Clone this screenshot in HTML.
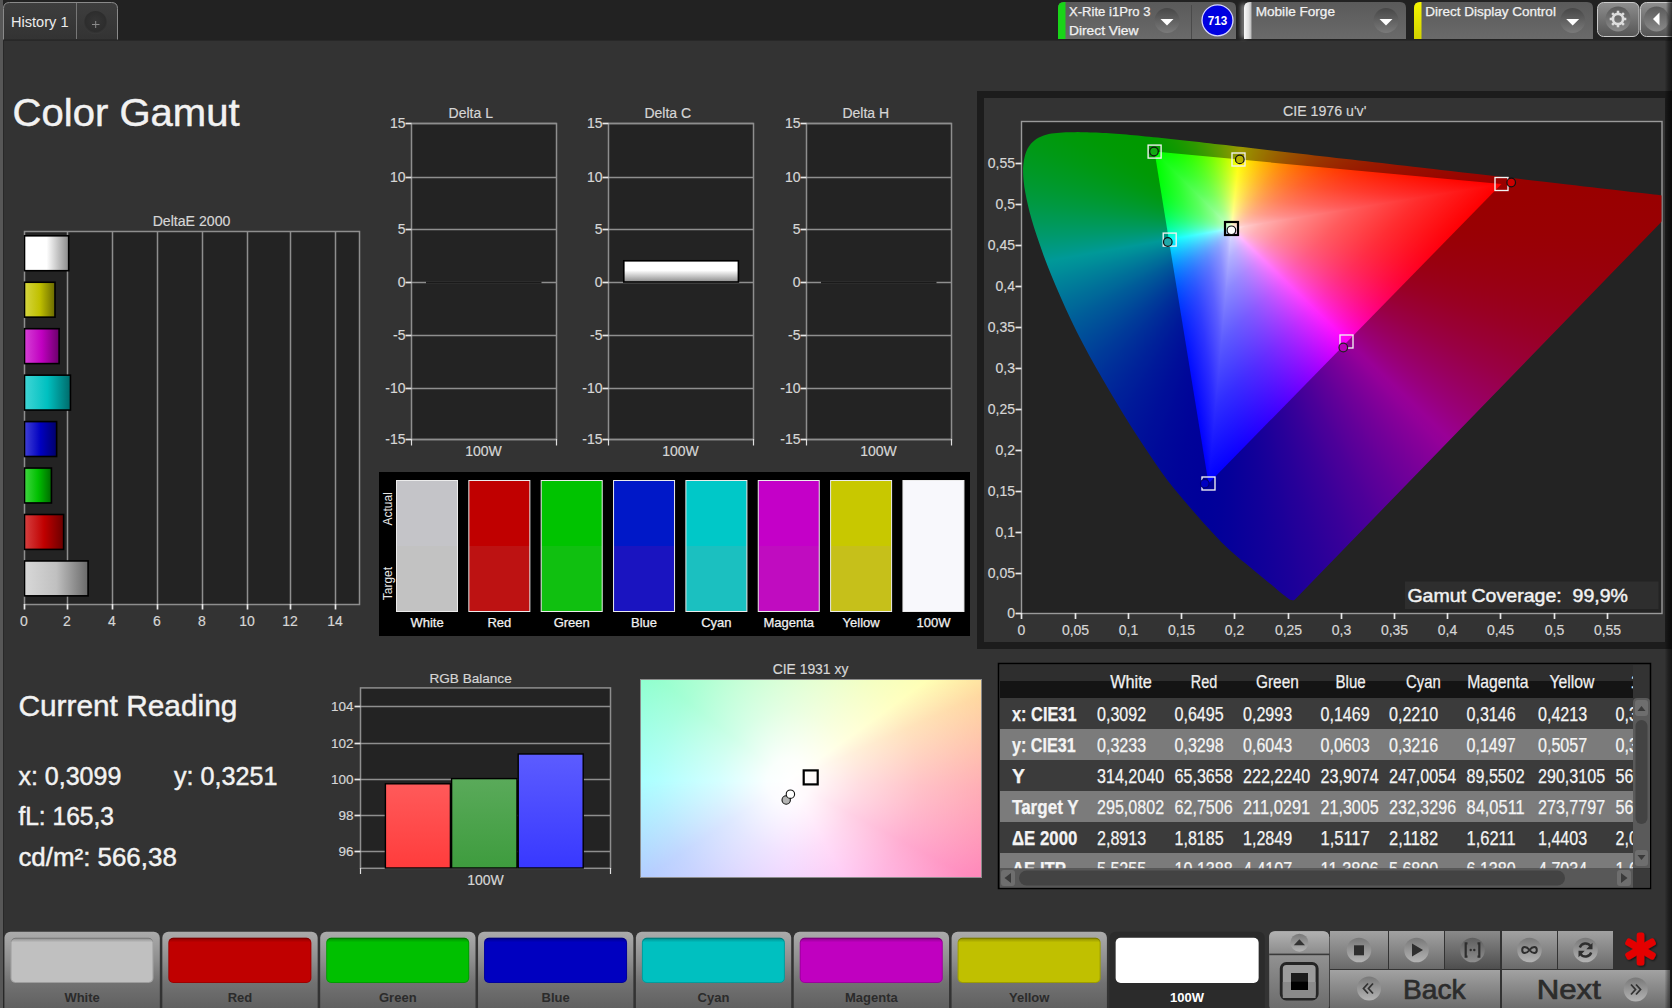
<!DOCTYPE html>
<html><head><meta charset="utf-8"><title>Color Gamut</title>
<style>html,body{margin:0;padding:0;background:#333;overflow:hidden;width:1672px;height:1008px}
svg{display:block;font-family:"Liberation Sans", sans-serif}
text[fill="#d6d6d6"]{stroke:#d6d6d6;stroke-width:0.18px}
text[fill="#f2f2f2"]{stroke:#f2f2f2;stroke-width:0.45px}
text[fill="#f4f4f4"],text[fill="#f0f0f0"]{stroke:#f2f2f2;stroke-width:0.25px}</style></head>
<body><svg width="1672" height="1008" viewBox="0 0 1672 1008">
<defs>
<linearGradient id="tabg" x1="0" y1="0" x2="0" y2="1"><stop offset="0" stop-color="#3e3e3e"/><stop offset="1" stop-color="#333"/></linearGradient>
<radialGradient id="plusg" cx="0.5" cy="0.45" r="0.55"><stop offset="0" stop-color="#363636"/><stop offset="0.8" stop-color="#2d2d2d"/><stop offset="1" stop-color="#3a3a3a"/></radialGradient>
<linearGradient id="ddg" x1="0" y1="0" x2="0" y2="1"><stop offset="0" stop-color="#5a5a5a"/><stop offset="1" stop-color="#6a6a6a"/></linearGradient>
<linearGradient id="ddbtn" x1="0" y1="0" x2="0" y2="1"><stop offset="0" stop-color="#474747"/><stop offset="1" stop-color="#7a7a7a"/></linearGradient>
<linearGradient id="wstrip" x1="0" y1="0" x2="1" y2="0"><stop offset="0" stop-color="#fafafa"/><stop offset="0.6" stop-color="#e0e0e0"/><stop offset="1" stop-color="#b8b8b8"/></linearGradient>
<linearGradient id="glow" x1="0" y1="0" x2="1" y2="0"><stop offset="0" stop-color="#fff" stop-opacity="0"/><stop offset="1" stop-color="#fff" stop-opacity="0.55"/></linearGradient>
<filter id="blur2" x="-200%" y="-20%" width="500%" height="140%"><feGaussianBlur stdDeviation="2.2"/></filter>
<linearGradient id="ystrip" x1="0" y1="0" x2="0" y2="1"><stop offset="0" stop-color="#f6f600"/><stop offset="1" stop-color="#d2d200"/></linearGradient>
<linearGradient id="gbg" x1="0" y1="0" x2="0" y2="1"><stop offset="0" stop-color="#8e8e8e"/><stop offset="1" stop-color="#555"/></linearGradient>
<linearGradient id="gbc" x1="0" y1="0" x2="0" y2="1"><stop offset="0" stop-color="#5a5a5a"/><stop offset="1" stop-color="#8a8a8a"/></linearGradient>
<linearGradient id="b_w" x1="0" y1="0" x2="1" y2="0"><stop offset="0" stop-color="#ffffff"/><stop offset="0.5" stop-color="#ffffff"/><stop offset="1" stop-color="#8a8a8a"/></linearGradient>
<linearGradient id="b_y" x1="0" y1="0" x2="1" y2="0"><stop offset="0" stop-color="#d6d640"/><stop offset="0.5" stop-color="#c0c000"/><stop offset="1" stop-color="#6a6a00"/></linearGradient>
<linearGradient id="b_m" x1="0" y1="0" x2="1" y2="0"><stop offset="0" stop-color="#d640d6"/><stop offset="0.5" stop-color="#c000c0"/><stop offset="1" stop-color="#6a006a"/></linearGradient>
<linearGradient id="b_c" x1="0" y1="0" x2="1" y2="0"><stop offset="0" stop-color="#40d6d6"/><stop offset="0.5" stop-color="#00c0c0"/><stop offset="1" stop-color="#006a6a"/></linearGradient>
<linearGradient id="b_b" x1="0" y1="0" x2="1" y2="0"><stop offset="0" stop-color="#4040d6"/><stop offset="0.5" stop-color="#0000c0"/><stop offset="1" stop-color="#00006a"/></linearGradient>
<linearGradient id="b_g" x1="0" y1="0" x2="1" y2="0"><stop offset="0" stop-color="#40d640"/><stop offset="0.5" stop-color="#00c000"/><stop offset="1" stop-color="#006a00"/></linearGradient>
<linearGradient id="b_r" x1="0" y1="0" x2="1" y2="0"><stop offset="0" stop-color="#d64040"/><stop offset="0.5" stop-color="#c00000"/><stop offset="1" stop-color="#6a0000"/></linearGradient>
<linearGradient id="b_gr" x1="0" y1="0" x2="1" y2="0"><stop offset="0" stop-color="#d8d8d8"/><stop offset="0.5" stop-color="#c0c0c0"/><stop offset="1" stop-color="#6a6a6a"/></linearGradient>
<linearGradient id="dcbar" x1="0" y1="0" x2="0" y2="1"><stop offset="0" stop-color="#fff"/><stop offset="0.45" stop-color="#fff"/><stop offset="1" stop-color="#8c8c8c"/></linearGradient>
<linearGradient id="rb_r" x1="0" y1="0" x2="0" y2="1"><stop offset="0" stop-color="#ff5a5a"/><stop offset="1" stop-color="#ff3c3c"/></linearGradient>
<linearGradient id="rb_g" x1="0" y1="0" x2="0" y2="1"><stop offset="0" stop-color="#5aaa5a"/><stop offset="1" stop-color="#3e9c3e"/></linearGradient>
<linearGradient id="rb_b" x1="0" y1="0" x2="0" y2="1"><stop offset="0" stop-color="#5c5cff"/><stop offset="1" stop-color="#3838ff"/></linearGradient>
<clipPath id="cliplocus"><path d="M1294.7,599.7 L1294.6,599.8 L1294.4,599.9 L1294.2,600.1 L1294.0,600.2 L1293.5,600.2 L1293.0,600.2 L1292.4,600.2 L1291.6,600.1 L1290.8,599.9 L1289.8,599.5 L1288.8,598.9 L1287.7,598.1 L1286.5,597.2 L1285.1,596.1 L1283.3,594.7 L1281.4,593.2 L1279.3,591.4 L1276.9,589.4 L1274.2,587.1 L1271.2,584.6 L1267.9,581.9 L1264.3,579.0 L1260.4,575.8 L1256.1,572.3 L1251.4,568.2 L1246.3,564.0 L1240.8,559.7 L1235.0,554.8 L1228.5,549.0 L1221.2,541.9 L1212.8,532.9 L1203.1,522.4 L1193.1,511.1 L1183.4,499.8 L1174.8,489.5 L1167.6,480.4 L1161.4,471.9 L1155.5,463.6 L1149.8,455.0 L1143.6,445.7 L1136.9,435.6 L1130.1,424.9 L1123.3,413.9 L1116.4,402.6 L1109.7,391.2 L1103.0,379.7 L1096.2,367.9 L1089.5,355.9 L1083.1,344.0 L1077.0,332.3 L1071.4,320.7 L1065.9,309.1 L1060.8,297.6 L1056.0,286.4 L1051.5,275.7 L1047.4,265.4 L1043.6,255.4 L1040.2,245.8 L1037.0,236.6 L1034.2,228.0 L1031.8,220.0 L1029.7,212.5 L1028.0,205.4 L1026.5,198.8 L1025.3,192.6 L1024.3,186.8 L1023.7,181.6 L1023.3,176.7 L1023.1,172.2 L1023.1,167.9 L1023.4,163.9 L1023.9,160.3 L1024.6,156.9 L1025.5,153.8 L1026.5,150.9 L1027.8,148.3 L1029.3,145.9 L1030.9,143.8 L1032.7,141.9 L1034.7,140.2 L1036.7,138.7 L1038.9,137.4 L1041.3,136.4 L1043.7,135.5 L1046.2,134.7 L1048.8,134.0 L1051.5,133.6 L1054.2,133.2 L1057.0,132.9 L1059.9,132.7 L1062.8,132.5 L1065.8,132.3 L1068.8,132.2 L1071.8,132.2 L1074.8,132.2 L1077.8,132.1 L1080.9,132.2 L1083.9,132.2 L1086.9,132.3 L1090.0,132.4 L1093.1,132.5 L1096.2,132.6 L1099.4,132.7 L1102.6,132.9 L1105.9,133.1 L1109.2,133.3 L1112.5,133.5 L1115.9,133.8 L1119.4,134.0 L1122.9,134.3 L1126.5,134.6 L1130.1,134.9 L1133.8,135.3 L1137.6,135.6 L1141.5,136.0 L1145.4,136.4 L1149.4,136.8 L1153.4,137.2 L1157.6,137.6 L1161.8,138.1 L1166.2,138.5 L1170.6,139.0 L1175.1,139.5 L1179.7,140.0 L1184.4,140.5 L1189.2,141.0 L1194.1,141.6 L1199.1,142.1 L1204.2,142.7 L1209.4,143.3 L1214.7,143.9 L1220.1,144.5 L1225.7,145.1 L1231.3,145.8 L1237.1,146.4 L1242.9,147.1 L1248.9,147.8 L1255.0,148.5 L1261.2,149.2 L1267.4,149.9 L1273.9,150.7 L1280.4,151.4 L1287.0,152.2 L1293.8,152.9 L1300.6,153.7 L1307.6,154.5 L1314.6,155.4 L1321.8,156.2 L1329.0,157.0 L1336.4,157.9 L1343.8,158.7 L1351.3,159.6 L1358.9,160.4 L1366.5,161.3 L1374.2,162.2 L1381.9,163.1 L1389.7,164.0 L1397.5,164.9 L1405.3,165.8 L1413.0,166.7 L1420.1,167.5 L1426.6,168.3 L1433.4,169.1 L1441.1,169.9 L1450.7,171.0 L1462.9,172.4 L1477.1,174.1 L1492.2,175.8 L1507.1,177.5 L1520.6,179.1 L1532.7,180.5 L1544.2,181.8 L1555.0,183.0 L1565.3,184.2 L1574.9,185.3 L1583.8,186.4 L1591.9,187.3 L1599.5,188.2 L1606.6,189.0 L1613.4,189.8 L1619.9,190.5 L1625.9,191.2 L1631.6,191.9 L1636.8,192.5 L1641.7,193.0 L1646.1,193.6 L1650.1,194.0 L1653.8,194.4 L1657.2,194.8 L1660.2,195.2 L1662.9,195.5 L1665.3,195.7 L1667.3,196.0 L1669.3,196.2 L1671.3,196.4 L1673.4,196.7 L1675.5,196.9 L1677.5,197.2 L1679.3,197.4 L1680.9,197.5 L1682.0,197.7 L1682.9,197.8 L1683.6,197.9 L1684.2,197.9 L1684.6,198.0 Z"/></clipPath>
<clipPath id="clipframe"><rect x="1022" y="122" width="639.5" height="491"/></clipPath>
<clipPath id="cliptri"><path d="M1154.5,151.6 L1501.5,184.0 L1208.5,483.5 Z"/></clipPath>
<linearGradient id="wt0" gradientUnits="userSpaceOnUse" x1="1231.5" y1="228.5" x2="1237.95" y2="159.39"><stop offset="0" stop-color="#fff" stop-opacity="1.000"/><stop offset="0.05" stop-color="#fff" stop-opacity="0.807"/><stop offset="0.12" stop-color="#fff" stop-opacity="0.688"/><stop offset="0.25" stop-color="#fff" stop-opacity="0.533"/><stop offset="0.45" stop-color="#fff" stop-opacity="0.355"/><stop offset="0.7" stop-color="#fff" stop-opacity="0.178"/><stop offset="1" stop-color="#fff" stop-opacity="0.000"/></linearGradient>
<linearGradient id="wt1" gradientUnits="userSpaceOnUse" x1="1231.5" y1="228.5" x2="1347.22" y2="341.71"><stop offset="0" stop-color="#fff" stop-opacity="1.000"/><stop offset="0.05" stop-color="#fff" stop-opacity="0.807"/><stop offset="0.12" stop-color="#fff" stop-opacity="0.688"/><stop offset="0.25" stop-color="#fff" stop-opacity="0.533"/><stop offset="0.45" stop-color="#fff" stop-opacity="0.355"/><stop offset="0.7" stop-color="#fff" stop-opacity="0.178"/><stop offset="1" stop-color="#fff" stop-opacity="0.000"/></linearGradient>
<linearGradient id="wt2" gradientUnits="userSpaceOnUse" x1="1231.5" y1="228.5" x2="1168.67" y2="238.72"><stop offset="0" stop-color="#fff" stop-opacity="1.000"/><stop offset="0.05" stop-color="#fff" stop-opacity="0.807"/><stop offset="0.12" stop-color="#fff" stop-opacity="0.688"/><stop offset="0.25" stop-color="#fff" stop-opacity="0.533"/><stop offset="0.45" stop-color="#fff" stop-opacity="0.355"/><stop offset="0.7" stop-color="#fff" stop-opacity="0.178"/><stop offset="1" stop-color="#fff" stop-opacity="0.000"/></linearGradient>
<clipPath id="cliphdr"><rect x="1000" y="665" width="633" height="33"/></clipPath>
<clipPath id="cliptab"><rect x="1000" y="698" width="633" height="170.5"/></clipPath>
<linearGradient id="cbg" x1="0" y1="0" x2="0" y2="1"><stop offset="0" stop-color="#ababab"/><stop offset="0.35" stop-color="#8e8e8e"/><stop offset="0.62" stop-color="#727272"/><stop offset="1" stop-color="#5c5c5c"/></linearGradient>
<linearGradient id="swbev" x1="0" y1="0" x2="0" y2="1"><stop offset="0" stop-color="#000" stop-opacity="0.28"/><stop offset="0.1" stop-color="#000" stop-opacity="0"/></linearGradient>
<linearGradient id="gb1" x1="0" y1="0" x2="0" y2="1"><stop offset="0" stop-color="#b2b2b2"/><stop offset="1" stop-color="#8c8c8c"/></linearGradient>
<linearGradient id="gb2" x1="0" y1="0" x2="0" y2="1"><stop offset="0" stop-color="#a2a2a2"/><stop offset="1" stop-color="#6a6a6a"/></linearGradient>
<linearGradient id="gb3" x1="0" y1="0" x2="0" y2="1"><stop offset="0" stop-color="#8a8a8a"/><stop offset="1" stop-color="#4e4e4e"/></linearGradient>
<linearGradient id="icg" x1="0" y1="0" x2="0" y2="1"><stop offset="0" stop-color="#787878"/><stop offset="1" stop-color="#b4b4b4"/></linearGradient>
<linearGradient id="icg3" x1="0" y1="0" x2="0" y2="1"><stop offset="0" stop-color="#5e5e5e"/><stop offset="1" stop-color="#8e8e8e"/></linearGradient>
<filter id="ash" x="-30%" y="-30%" width="160%" height="160%"><feDropShadow dx="1" dy="1" stdDeviation="1" flood-color="#000" flood-opacity="0.7"/></filter>
<linearGradient id="rstrip" x1="0" y1="0" x2="1" y2="0"><stop offset="0" stop-color="#000" stop-opacity="0"/><stop offset="0.45" stop-color="#000" stop-opacity="0.35"/><stop offset="1" stop-color="#000" stop-opacity="0.62"/></linearGradient>
</defs>
<rect x="0" y="0" width="1672" height="1008" fill="#333333"/>
<rect x="0" y="0" width="1672" height="40" fill="#222222"/>
<rect x="0" y="40" width="1672" height="1" fill="#282828"/>
<rect x="0" y="0" width="3" height="1008" fill="#575757"/>
<rect x="3" y="40" width="1" height="968" fill="#282828"/>
<path d="M3.5,39.5 V8.5 Q3.5,2.5 9.5,2.5 H111.5 Q117.5,2.5 117.5,8.5 V39.5" fill="url(#tabg)" stroke="#8a8a8a" stroke-width="1"/>
<line x1="76.5" y1="3" x2="76.5" y2="39" stroke="#777" stroke-width="1"/>
<circle cx="95.5" cy="22.5" r="11.5" fill="url(#plusg)"/>
<line x1="92" y1="24.5" x2="99.5" y2="24.5" stroke="#8a8a8a" stroke-width="1"/>
<line x1="95.7" y1="21" x2="95.7" y2="28" stroke="#8a8a8a" stroke-width="1"/>
<text x="11" y="27.3" font-size="14.6" fill="#ececec" textLength="57.5" lengthAdjust="spacingAndGlyphs">History 1</text>
<path d="M1058,39 V8 Q1058,2 1064,2 H1230 Q1236,2 1236,8 V39 Z" fill="url(#ddg)"/>
<path d="M1058,39 V8 Q1058,2 1064,2 H1065.5 V39 Z" fill="#19d419"/>
<circle cx="1167" cy="20.5" r="12.5" fill="url(#ddbtn)"/>
<path d="M1160.5,19 H1173.5 L1167,25.5 Z" fill="#fff"/>
<text x="1069" y="15.6" font-size="12" fill="#f0f0f0" textLength="81.5" lengthAdjust="spacingAndGlyphs">X-Rite i1Pro 3</text>
<text x="1069" y="34.7" font-size="12" fill="#f0f0f0" textLength="69.5" lengthAdjust="spacingAndGlyphs">Direct View</text>
<line x1="1191.5" y1="5" x2="1191.5" y2="39" stroke="#4a4a4a" stroke-width="1"/>
<circle cx="1217.5" cy="20.3" r="15.5" fill="#0000e0" stroke="#d8d8ff" stroke-width="1.3"/>
<text x="1217.5" y="24.8" font-size="12" fill="#ffffff" text-anchor="middle" font-weight="bold" textLength="19.5" lengthAdjust="spacingAndGlyphs">713</text>
<rect x="1241.5" y="4" width="4" height="34" fill="#ffffff" opacity="0.55" filter="url(#blur2)"/>
<path d="M1244,39 V8 Q1244,2 1250,2 H1400 Q1406,2 1406,8 V39 Z" fill="url(#ddg)"/>
<path d="M1244,39 V8 Q1244,2 1250,2 H1251.5 V39 Z" fill="url(#wstrip)"/>
<circle cx="1386" cy="20.5" r="12.5" fill="url(#ddbtn)"/>
<path d="M1379.5,19 H1392.5 L1386,25.5 Z" fill="#fff"/>
<text x="1255.7" y="15.6" font-size="12" fill="#f0f0f0" textLength="79.3" lengthAdjust="spacingAndGlyphs">Mobile Forge</text>
<path d="M1414,39 V8 Q1414,2 1420,2 H1587 Q1593,2 1593,8 V39 Z" fill="url(#ddg)"/>
<path d="M1414,39 V8 Q1414,2 1420,2 H1421.5 V39 Z" fill="url(#ystrip)"/>
<circle cx="1572.7" cy="20.5" r="12.5" fill="url(#ddbtn)"/>
<path d="M1566.2,19 H1579.2 L1572.7,25.5 Z" fill="#fff"/>
<text x="1425.3" y="15.6" font-size="12" fill="#f0f0f0" textLength="130.6" lengthAdjust="spacingAndGlyphs">Direct Display Control</text>
<rect x="1597.5" y="2.5" width="41.5" height="34" fill="url(#gbg)" stroke="#c9c9c9" stroke-width="1" rx="6"/>
<circle cx="1618" cy="19" r="12.5" fill="url(#gbc)"/>
<g transform="translate(1618,19)" fill="#dedede"><rect x="-1.25" y="-8.3" width="2.5" height="3.6" transform="rotate(0)"/><rect x="-1.25" y="-8.3" width="2.5" height="3.6" transform="rotate(45)"/><rect x="-1.25" y="-8.3" width="2.5" height="3.6" transform="rotate(90)"/><rect x="-1.25" y="-8.3" width="2.5" height="3.6" transform="rotate(135)"/><rect x="-1.25" y="-8.3" width="2.5" height="3.6" transform="rotate(180)"/><rect x="-1.25" y="-8.3" width="2.5" height="3.6" transform="rotate(225)"/><rect x="-1.25" y="-8.3" width="2.5" height="3.6" transform="rotate(270)"/><rect x="-1.25" y="-8.3" width="2.5" height="3.6" transform="rotate(315)"/><circle r="5.1" fill="none" stroke="#dedede" stroke-width="2.7"/></g>
<rect x="1640.5" y="2.5" width="45" height="34" fill="url(#gbg)" stroke="#c9c9c9" stroke-width="1" rx="6"/>
<circle cx="1656.5" cy="19" r="12.5" fill="url(#gbc)"/>
<path d="M1653,19 L1659.5,12.5 V25.5 Z" fill="#fff"/>
<text x="12.6" y="126.3" font-size="38.5" fill="#f2f2f2" textLength="227" lengthAdjust="spacingAndGlyphs">Color Gamut</text>
<text x="191.5" y="226" font-size="14" fill="#d6d6d6" text-anchor="middle" textLength="77.7" lengthAdjust="spacingAndGlyphs">DeltaE 2000</text>
<rect x="24.5" y="231.5" width="335" height="373" fill="#232323" stroke="#8e8e8e" stroke-width="1.5"/>
<line x1="67.5" y1="232" x2="67.5" y2="604" stroke="#8e8e8e" stroke-width="1.5"/>
<line x1="112.5" y1="232" x2="112.5" y2="604" stroke="#8e8e8e" stroke-width="1.5"/>
<line x1="157.5" y1="232" x2="157.5" y2="604" stroke="#8e8e8e" stroke-width="1.5"/>
<line x1="202.5" y1="232" x2="202.5" y2="604" stroke="#8e8e8e" stroke-width="1.5"/>
<line x1="247.5" y1="232" x2="247.5" y2="604" stroke="#8e8e8e" stroke-width="1.5"/>
<line x1="290.5" y1="232" x2="290.5" y2="604" stroke="#8e8e8e" stroke-width="1.5"/>
<line x1="335.5" y1="232" x2="335.5" y2="604" stroke="#8e8e8e" stroke-width="1.5"/>
<line x1="24.5" y1="604" x2="24.5" y2="609.5" stroke="#e8e8e8" stroke-width="1.7"/>
<text x="24.0" y="626.2" font-size="14" fill="#d6d6d6" text-anchor="middle">0</text>
<line x1="67.5" y1="604" x2="67.5" y2="609.5" stroke="#e8e8e8" stroke-width="1.7"/>
<text x="67.0" y="626.2" font-size="14" fill="#d6d6d6" text-anchor="middle">2</text>
<line x1="112.5" y1="604" x2="112.5" y2="609.5" stroke="#e8e8e8" stroke-width="1.7"/>
<text x="112.0" y="626.2" font-size="14" fill="#d6d6d6" text-anchor="middle">4</text>
<line x1="157.5" y1="604" x2="157.5" y2="609.5" stroke="#e8e8e8" stroke-width="1.7"/>
<text x="157.0" y="626.2" font-size="14" fill="#d6d6d6" text-anchor="middle">6</text>
<line x1="202.5" y1="604" x2="202.5" y2="609.5" stroke="#e8e8e8" stroke-width="1.7"/>
<text x="202.0" y="626.2" font-size="14" fill="#d6d6d6" text-anchor="middle">8</text>
<line x1="247.5" y1="604" x2="247.5" y2="609.5" stroke="#e8e8e8" stroke-width="1.7"/>
<text x="247.0" y="626.2" font-size="14" fill="#d6d6d6" text-anchor="middle">10</text>
<line x1="290.5" y1="604" x2="290.5" y2="609.5" stroke="#e8e8e8" stroke-width="1.7"/>
<text x="290.0" y="626.2" font-size="14" fill="#d6d6d6" text-anchor="middle">12</text>
<line x1="335.5" y1="604" x2="335.5" y2="609.5" stroke="#e8e8e8" stroke-width="1.7"/>
<text x="335.0" y="626.2" font-size="14" fill="#d6d6d6" text-anchor="middle">14</text>
<rect x="24.5" y="235.8" width="44.172399999999996" height="34.9" fill="url(#b_w)" stroke="#000" stroke-width="1.6"/>
<rect x="24.5" y="282.25" width="30.493243" height="34.9" fill="url(#b_y)" stroke="#000" stroke-width="1.6"/>
<rect x="24.5" y="328.7" width="34.617291" height="34.9" fill="url(#b_m)" stroke="#000" stroke-width="1.6"/>
<rect x="24.5" y="375.15000000000003" width="45.95614199999999" height="34.9" fill="url(#b_c)" stroke="#000" stroke-width="1.6"/>
<rect x="24.5" y="421.6" width="32.121877" height="34.9" fill="url(#b_b)" stroke="#000" stroke-width="1.6"/>
<rect x="24.5" y="468.05" width="26.948569" height="34.9" fill="url(#b_g)" stroke="#000" stroke-width="1.6"/>
<rect x="24.5" y="514.5" width="39.119985" height="34.9" fill="url(#b_r)" stroke="#000" stroke-width="1.6"/>
<rect x="24.5" y="560.95" width="63.590553" height="34.9" fill="url(#b_gr)" stroke="#000" stroke-width="1.6"/>
<text x="470.8" y="118" font-size="14" fill="#d6d6d6" text-anchor="middle">Delta L</text>
<rect x="411.5" y="123.5" width="145" height="316" fill="#232323" stroke="#8e8e8e" stroke-width="1.5"/>
<line x1="411.5" y1="123.5" x2="556.5" y2="123.5" stroke="#8e8e8e" stroke-width="1.5"/>
<line x1="405.5" y1="123.5" x2="411.5" y2="123.5" stroke="#e8e8e8" stroke-width="1.7"/>
<text x="405.5" y="128.2" font-size="14" fill="#d6d6d6" text-anchor="end">15</text>
<line x1="411.5" y1="177.5" x2="556.5" y2="177.5" stroke="#8e8e8e" stroke-width="1.5"/>
<line x1="405.5" y1="177.5" x2="411.5" y2="177.5" stroke="#e8e8e8" stroke-width="1.7"/>
<text x="405.5" y="182.2" font-size="14" fill="#d6d6d6" text-anchor="end">10</text>
<line x1="411.5" y1="229.5" x2="556.5" y2="229.5" stroke="#8e8e8e" stroke-width="1.5"/>
<line x1="405.5" y1="229.5" x2="411.5" y2="229.5" stroke="#e8e8e8" stroke-width="1.7"/>
<text x="405.5" y="234.2" font-size="14" fill="#d6d6d6" text-anchor="end">5</text>
<line x1="411.5" y1="282.5" x2="556.5" y2="282.5" stroke="#8e8e8e" stroke-width="1.5"/>
<line x1="405.5" y1="282.5" x2="411.5" y2="282.5" stroke="#e8e8e8" stroke-width="1.7"/>
<text x="405.5" y="287.2" font-size="14" fill="#d6d6d6" text-anchor="end">0</text>
<line x1="411.5" y1="335.5" x2="556.5" y2="335.5" stroke="#8e8e8e" stroke-width="1.5"/>
<line x1="405.5" y1="335.5" x2="411.5" y2="335.5" stroke="#e8e8e8" stroke-width="1.7"/>
<text x="405.5" y="340.2" font-size="14" fill="#d6d6d6" text-anchor="end">-5</text>
<line x1="411.5" y1="388.5" x2="556.5" y2="388.5" stroke="#8e8e8e" stroke-width="1.5"/>
<line x1="405.5" y1="388.5" x2="411.5" y2="388.5" stroke="#e8e8e8" stroke-width="1.7"/>
<text x="405.5" y="393.2" font-size="14" fill="#d6d6d6" text-anchor="end">-10</text>
<line x1="411.5" y1="439.5" x2="556.5" y2="439.5" stroke="#8e8e8e" stroke-width="1.5"/>
<line x1="405.5" y1="439.5" x2="411.5" y2="439.5" stroke="#e8e8e8" stroke-width="1.7"/>
<text x="405.5" y="444.2" font-size="14" fill="#d6d6d6" text-anchor="end">-15</text>
<line x1="411.5" y1="439" x2="411.5" y2="445.5" stroke="#e0e0e0" stroke-width="1.2"/>
<line x1="556.5" y1="439" x2="556.5" y2="445.5" stroke="#e0e0e0" stroke-width="1.2"/>
<text x="483.5" y="455.6" font-size="14" fill="#d6d6d6" text-anchor="middle">100W</text>
<line x1="426.0" y1="282.5" x2="541.5" y2="282.5" stroke="#1a1a1a" stroke-width="1.9"/>
<text x="667.8" y="118" font-size="14" fill="#d6d6d6" text-anchor="middle">Delta C</text>
<rect x="608.5" y="123.5" width="145" height="316" fill="#232323" stroke="#8e8e8e" stroke-width="1.5"/>
<line x1="608.5" y1="123.5" x2="753.5" y2="123.5" stroke="#8e8e8e" stroke-width="1.5"/>
<line x1="602.5" y1="123.5" x2="608.5" y2="123.5" stroke="#e8e8e8" stroke-width="1.7"/>
<text x="602.5" y="128.2" font-size="14" fill="#d6d6d6" text-anchor="end">15</text>
<line x1="608.5" y1="177.5" x2="753.5" y2="177.5" stroke="#8e8e8e" stroke-width="1.5"/>
<line x1="602.5" y1="177.5" x2="608.5" y2="177.5" stroke="#e8e8e8" stroke-width="1.7"/>
<text x="602.5" y="182.2" font-size="14" fill="#d6d6d6" text-anchor="end">10</text>
<line x1="608.5" y1="229.5" x2="753.5" y2="229.5" stroke="#8e8e8e" stroke-width="1.5"/>
<line x1="602.5" y1="229.5" x2="608.5" y2="229.5" stroke="#e8e8e8" stroke-width="1.7"/>
<text x="602.5" y="234.2" font-size="14" fill="#d6d6d6" text-anchor="end">5</text>
<line x1="608.5" y1="282.5" x2="753.5" y2="282.5" stroke="#8e8e8e" stroke-width="1.5"/>
<line x1="602.5" y1="282.5" x2="608.5" y2="282.5" stroke="#e8e8e8" stroke-width="1.7"/>
<text x="602.5" y="287.2" font-size="14" fill="#d6d6d6" text-anchor="end">0</text>
<line x1="608.5" y1="335.5" x2="753.5" y2="335.5" stroke="#8e8e8e" stroke-width="1.5"/>
<line x1="602.5" y1="335.5" x2="608.5" y2="335.5" stroke="#e8e8e8" stroke-width="1.7"/>
<text x="602.5" y="340.2" font-size="14" fill="#d6d6d6" text-anchor="end">-5</text>
<line x1="608.5" y1="388.5" x2="753.5" y2="388.5" stroke="#8e8e8e" stroke-width="1.5"/>
<line x1="602.5" y1="388.5" x2="608.5" y2="388.5" stroke="#e8e8e8" stroke-width="1.7"/>
<text x="602.5" y="393.2" font-size="14" fill="#d6d6d6" text-anchor="end">-10</text>
<line x1="608.5" y1="439.5" x2="753.5" y2="439.5" stroke="#8e8e8e" stroke-width="1.5"/>
<line x1="602.5" y1="439.5" x2="608.5" y2="439.5" stroke="#e8e8e8" stroke-width="1.7"/>
<text x="602.5" y="444.2" font-size="14" fill="#d6d6d6" text-anchor="end">-15</text>
<line x1="608.5" y1="439" x2="608.5" y2="445.5" stroke="#e0e0e0" stroke-width="1.2"/>
<line x1="753.5" y1="439" x2="753.5" y2="445.5" stroke="#e0e0e0" stroke-width="1.2"/>
<text x="680.5" y="455.6" font-size="14" fill="#d6d6d6" text-anchor="middle">100W</text>
<rect x="623.8" y="260.8" width="114.6" height="21.2" fill="url(#dcbar)" stroke="#000" stroke-width="1.6"/>
<text x="865.8" y="118" font-size="14" fill="#d6d6d6" text-anchor="middle">Delta H</text>
<rect x="806.5" y="123.5" width="145" height="316" fill="#232323" stroke="#8e8e8e" stroke-width="1.5"/>
<line x1="806.5" y1="123.5" x2="951.5" y2="123.5" stroke="#8e8e8e" stroke-width="1.5"/>
<line x1="800.5" y1="123.5" x2="806.5" y2="123.5" stroke="#e8e8e8" stroke-width="1.7"/>
<text x="800.5" y="128.2" font-size="14" fill="#d6d6d6" text-anchor="end">15</text>
<line x1="806.5" y1="177.5" x2="951.5" y2="177.5" stroke="#8e8e8e" stroke-width="1.5"/>
<line x1="800.5" y1="177.5" x2="806.5" y2="177.5" stroke="#e8e8e8" stroke-width="1.7"/>
<text x="800.5" y="182.2" font-size="14" fill="#d6d6d6" text-anchor="end">10</text>
<line x1="806.5" y1="229.5" x2="951.5" y2="229.5" stroke="#8e8e8e" stroke-width="1.5"/>
<line x1="800.5" y1="229.5" x2="806.5" y2="229.5" stroke="#e8e8e8" stroke-width="1.7"/>
<text x="800.5" y="234.2" font-size="14" fill="#d6d6d6" text-anchor="end">5</text>
<line x1="806.5" y1="282.5" x2="951.5" y2="282.5" stroke="#8e8e8e" stroke-width="1.5"/>
<line x1="800.5" y1="282.5" x2="806.5" y2="282.5" stroke="#e8e8e8" stroke-width="1.7"/>
<text x="800.5" y="287.2" font-size="14" fill="#d6d6d6" text-anchor="end">0</text>
<line x1="806.5" y1="335.5" x2="951.5" y2="335.5" stroke="#8e8e8e" stroke-width="1.5"/>
<line x1="800.5" y1="335.5" x2="806.5" y2="335.5" stroke="#e8e8e8" stroke-width="1.7"/>
<text x="800.5" y="340.2" font-size="14" fill="#d6d6d6" text-anchor="end">-5</text>
<line x1="806.5" y1="388.5" x2="951.5" y2="388.5" stroke="#8e8e8e" stroke-width="1.5"/>
<line x1="800.5" y1="388.5" x2="806.5" y2="388.5" stroke="#e8e8e8" stroke-width="1.7"/>
<text x="800.5" y="393.2" font-size="14" fill="#d6d6d6" text-anchor="end">-10</text>
<line x1="806.5" y1="439.5" x2="951.5" y2="439.5" stroke="#8e8e8e" stroke-width="1.5"/>
<line x1="800.5" y1="439.5" x2="806.5" y2="439.5" stroke="#e8e8e8" stroke-width="1.7"/>
<text x="800.5" y="444.2" font-size="14" fill="#d6d6d6" text-anchor="end">-15</text>
<line x1="806.5" y1="439" x2="806.5" y2="445.5" stroke="#e0e0e0" stroke-width="1.2"/>
<line x1="951.5" y1="439" x2="951.5" y2="445.5" stroke="#e0e0e0" stroke-width="1.2"/>
<text x="878.5" y="455.6" font-size="14" fill="#d6d6d6" text-anchor="middle">100W</text>
<line x1="821.0" y1="282.5" x2="936.5" y2="282.5" stroke="#1a1a1a" stroke-width="1.9"/>
<rect x="379" y="472" width="591" height="164" fill="#000"/>
<rect x="396.5" y="480.5" width="61" height="65.5" fill="#c4c4c8"/>
<rect x="396.5" y="546" width="61" height="65.5" fill="#c2c2c2"/>
<rect x="396.5" y="480.5" width="61" height="131" fill="none" stroke="#ececec" stroke-width="1"/>
<text x="427.0" y="627.4" font-size="13" fill="#f0f0f0" text-anchor="middle">White</text>
<rect x="468.85" y="480.5" width="61" height="65.5" fill="#c00000"/>
<rect x="468.85" y="546" width="61" height="65.5" fill="#bd1212"/>
<rect x="468.85" y="480.5" width="61" height="131" fill="none" stroke="#ececec" stroke-width="1"/>
<text x="499.35" y="627.4" font-size="13" fill="#f0f0f0" text-anchor="middle">Red</text>
<rect x="541.2" y="480.5" width="61" height="65.5" fill="#00c300"/>
<rect x="541.2" y="546" width="61" height="65.5" fill="#10c010"/>
<rect x="541.2" y="480.5" width="61" height="131" fill="none" stroke="#ececec" stroke-width="1"/>
<text x="571.7" y="627.4" font-size="13" fill="#f0f0f0" text-anchor="middle">Green</text>
<rect x="613.55" y="480.5" width="61" height="65.5" fill="#0018c8"/>
<rect x="613.55" y="546" width="61" height="65.5" fill="#1a14c0"/>
<rect x="613.55" y="480.5" width="61" height="131" fill="none" stroke="#ececec" stroke-width="1"/>
<text x="644.05" y="627.4" font-size="13" fill="#f0f0f0" text-anchor="middle">Blue</text>
<rect x="685.9" y="480.5" width="61" height="65.5" fill="#00c8c8"/>
<rect x="685.9" y="546" width="61" height="65.5" fill="#1bc0c0"/>
<rect x="685.9" y="480.5" width="61" height="131" fill="none" stroke="#ececec" stroke-width="1"/>
<text x="716.4" y="627.4" font-size="13" fill="#f0f0f0" text-anchor="middle">Cyan</text>
<rect x="758.25" y="480.5" width="61" height="65.5" fill="#c400c8"/>
<rect x="758.25" y="546" width="61" height="65.5" fill="#c00cc0"/>
<rect x="758.25" y="480.5" width="61" height="131" fill="none" stroke="#ececec" stroke-width="1"/>
<text x="788.75" y="627.4" font-size="13" fill="#f0f0f0" text-anchor="middle">Magenta</text>
<rect x="830.5999999999999" y="480.5" width="61" height="65.5" fill="#c8c800"/>
<rect x="830.5999999999999" y="546" width="61" height="65.5" fill="#c6c01a"/>
<rect x="830.5999999999999" y="480.5" width="61" height="131" fill="none" stroke="#ececec" stroke-width="1"/>
<text x="861.0999999999999" y="627.4" font-size="13" fill="#f0f0f0" text-anchor="middle">Yellow</text>
<rect x="902.9499999999999" y="480.5" width="61" height="65.5" fill="#f8f8fc"/>
<rect x="902.9499999999999" y="546" width="61" height="65.5" fill="#f8f8fc"/>
<rect x="902.9499999999999" y="480.5" width="61" height="131" fill="none" stroke="#ececec" stroke-width="1"/>
<text x="933.4499999999999" y="627.4" font-size="13" fill="#f0f0f0" text-anchor="middle">100W</text>
<text transform="translate(391.5,508.8) rotate(-90)" font-size="12" fill="#e8e8e8" text-anchor="middle">Actual</text>
<text transform="translate(391.5,583.6) rotate(-90)" font-size="12" fill="#e8e8e8" text-anchor="middle">Target</text>
<text x="18.4" y="715.8" font-size="30" fill="#f2f2f2" textLength="219" lengthAdjust="spacingAndGlyphs">Current Reading</text>
<text x="18.4" y="784.7" font-size="25" fill="#f2f2f2" textLength="103" lengthAdjust="spacingAndGlyphs">x: 0,3099</text>
<text x="174" y="784.7" font-size="25" fill="#f2f2f2" textLength="103.5" lengthAdjust="spacingAndGlyphs">y: 0,3251</text>
<text x="18.4" y="825.3" font-size="25" fill="#f2f2f2" textLength="95.6" lengthAdjust="spacingAndGlyphs">fL: 165,3</text>
<text x="18.4" y="866.3" font-size="25" fill="#f2f2f2" textLength="158.4" lengthAdjust="spacingAndGlyphs">cd/m²: 566,38</text>
<text x="470.6" y="683.1" font-size="13" fill="#d6d6d6" text-anchor="middle" textLength="82.2" lengthAdjust="spacingAndGlyphs">RGB Balance</text>
<rect x="360.5" y="687.9" width="250" height="180.4" fill="#232323" stroke="#8e8e8e" stroke-width="1.5"/>
<line x1="360.5" y1="706.5" x2="610.5" y2="706.5" stroke="#8e8e8e" stroke-width="1.5"/>
<line x1="354.5" y1="706.5" x2="360.5" y2="706.5" stroke="#e8e8e8" stroke-width="1.7"/>
<text x="353.5" y="711.3" font-size="13.5" fill="#d6d6d6" text-anchor="end">104</text>
<line x1="360.5" y1="743.5" x2="610.5" y2="743.5" stroke="#8e8e8e" stroke-width="1.5"/>
<line x1="354.5" y1="743.5" x2="360.5" y2="743.5" stroke="#e8e8e8" stroke-width="1.7"/>
<text x="353.5" y="748.3" font-size="13.5" fill="#d6d6d6" text-anchor="end">102</text>
<line x1="360.5" y1="779.5" x2="610.5" y2="779.5" stroke="#8e8e8e" stroke-width="1.5"/>
<line x1="354.5" y1="779.5" x2="360.5" y2="779.5" stroke="#e8e8e8" stroke-width="1.7"/>
<text x="353.5" y="784.3" font-size="13.5" fill="#d6d6d6" text-anchor="end">100</text>
<line x1="360.5" y1="815.5" x2="610.5" y2="815.5" stroke="#8e8e8e" stroke-width="1.5"/>
<line x1="354.5" y1="815.5" x2="360.5" y2="815.5" stroke="#e8e8e8" stroke-width="1.7"/>
<text x="353.5" y="820.3" font-size="13.5" fill="#d6d6d6" text-anchor="end">98</text>
<line x1="360.5" y1="851.5" x2="610.5" y2="851.5" stroke="#8e8e8e" stroke-width="1.5"/>
<line x1="354.5" y1="851.5" x2="360.5" y2="851.5" stroke="#e8e8e8" stroke-width="1.7"/>
<text x="353.5" y="856.3" font-size="13.5" fill="#d6d6d6" text-anchor="end">96</text>
<line x1="360.5" y1="868" x2="360.5" y2="874" stroke="#e0e0e0" stroke-width="1.2"/>
<line x1="610.5" y1="868" x2="610.5" y2="874" stroke="#e0e0e0" stroke-width="1.2"/>
<rect x="385.40000000000003" y="783.8" width="64.99999999999999" height="84.20000000000005" fill="url(#rb_r)" stroke="#000" stroke-width="1.4"/>
<rect x="451.6" y="778.6" width="65.40000000000002" height="89.39999999999998" fill="url(#rb_g)" stroke="#000" stroke-width="1.4"/>
<rect x="518.2" y="754" width="64.99999999999993" height="114" fill="url(#rb_b)" stroke="#000" stroke-width="1.4"/>
<text x="485.5" y="885" font-size="14" fill="#d6d6d6" text-anchor="middle">100W</text>
<rect x="977" y="91" width="695" height="558" fill="#1c1c1c"/>
<rect x="984" y="98" width="681" height="544" fill="#333333"/>
<text x="1324.7" y="116" font-size="14" fill="#d6d6d6" text-anchor="middle" textLength="83.4" lengthAdjust="spacingAndGlyphs">CIE 1976 u'v'</text>
<rect x="1021.5" y="121.5" width="640.5" height="492" fill="#232323" stroke="#9a9a9a" stroke-width="1.4"/>
<line x1="1015.5" y1="613.5" x2="1021.5" y2="613.5" stroke="#e8e8e8" stroke-width="1.7"/>
<text x="1015" y="618.3" font-size="14" fill="#d6d6d6" text-anchor="end">0</text>
<line x1="1015.5" y1="573.5" x2="1021.5" y2="573.5" stroke="#e8e8e8" stroke-width="1.7"/>
<text x="1015" y="578.3" font-size="14" fill="#d6d6d6" text-anchor="end">0,05</text>
<line x1="1015.5" y1="532.5" x2="1021.5" y2="532.5" stroke="#e8e8e8" stroke-width="1.7"/>
<text x="1015" y="537.3" font-size="14" fill="#d6d6d6" text-anchor="end">0,1</text>
<line x1="1015.5" y1="491.5" x2="1021.5" y2="491.5" stroke="#e8e8e8" stroke-width="1.7"/>
<text x="1015" y="496.3" font-size="14" fill="#d6d6d6" text-anchor="end">0,15</text>
<line x1="1015.5" y1="450.5" x2="1021.5" y2="450.5" stroke="#e8e8e8" stroke-width="1.7"/>
<text x="1015" y="455.3" font-size="14" fill="#d6d6d6" text-anchor="end">0,2</text>
<line x1="1015.5" y1="409.5" x2="1021.5" y2="409.5" stroke="#e8e8e8" stroke-width="1.7"/>
<text x="1015" y="414.3" font-size="14" fill="#d6d6d6" text-anchor="end">0,25</text>
<line x1="1015.5" y1="368.5" x2="1021.5" y2="368.5" stroke="#e8e8e8" stroke-width="1.7"/>
<text x="1015" y="373.3" font-size="14" fill="#d6d6d6" text-anchor="end">0,3</text>
<line x1="1015.5" y1="327.5" x2="1021.5" y2="327.5" stroke="#e8e8e8" stroke-width="1.7"/>
<text x="1015" y="332.3" font-size="14" fill="#d6d6d6" text-anchor="end">0,35</text>
<line x1="1015.5" y1="286.5" x2="1021.5" y2="286.5" stroke="#e8e8e8" stroke-width="1.7"/>
<text x="1015" y="291.3" font-size="14" fill="#d6d6d6" text-anchor="end">0,4</text>
<line x1="1015.5" y1="245.5" x2="1021.5" y2="245.5" stroke="#e8e8e8" stroke-width="1.7"/>
<text x="1015" y="250.3" font-size="14" fill="#d6d6d6" text-anchor="end">0,45</text>
<line x1="1015.5" y1="204.5" x2="1021.5" y2="204.5" stroke="#e8e8e8" stroke-width="1.7"/>
<text x="1015" y="209.3" font-size="14" fill="#d6d6d6" text-anchor="end">0,5</text>
<line x1="1015.5" y1="163.5" x2="1021.5" y2="163.5" stroke="#e8e8e8" stroke-width="1.7"/>
<text x="1015" y="168.3" font-size="14" fill="#d6d6d6" text-anchor="end">0,55</text>
<line x1="1021.5" y1="613" x2="1021.5" y2="619" stroke="#e8e8e8" stroke-width="1.7"/>
<text x="1021.5" y="634.5" font-size="14" fill="#d6d6d6" text-anchor="middle">0</text>
<line x1="1075.5" y1="613" x2="1075.5" y2="619" stroke="#e8e8e8" stroke-width="1.7"/>
<text x="1075.5" y="634.5" font-size="14" fill="#d6d6d6" text-anchor="middle">0,05</text>
<line x1="1128.5" y1="613" x2="1128.5" y2="619" stroke="#e8e8e8" stroke-width="1.7"/>
<text x="1128.5" y="634.5" font-size="14" fill="#d6d6d6" text-anchor="middle">0,1</text>
<line x1="1181.5" y1="613" x2="1181.5" y2="619" stroke="#e8e8e8" stroke-width="1.7"/>
<text x="1181.5" y="634.5" font-size="14" fill="#d6d6d6" text-anchor="middle">0,15</text>
<line x1="1234.5" y1="613" x2="1234.5" y2="619" stroke="#e8e8e8" stroke-width="1.7"/>
<text x="1234.5" y="634.5" font-size="14" fill="#d6d6d6" text-anchor="middle">0,2</text>
<line x1="1288.5" y1="613" x2="1288.5" y2="619" stroke="#e8e8e8" stroke-width="1.7"/>
<text x="1288.5" y="634.5" font-size="14" fill="#d6d6d6" text-anchor="middle">0,25</text>
<line x1="1341.5" y1="613" x2="1341.5" y2="619" stroke="#e8e8e8" stroke-width="1.7"/>
<text x="1341.5" y="634.5" font-size="14" fill="#d6d6d6" text-anchor="middle">0,3</text>
<line x1="1394.5" y1="613" x2="1394.5" y2="619" stroke="#e8e8e8" stroke-width="1.7"/>
<text x="1394.5" y="634.5" font-size="14" fill="#d6d6d6" text-anchor="middle">0,35</text>
<line x1="1447.5" y1="613" x2="1447.5" y2="619" stroke="#e8e8e8" stroke-width="1.7"/>
<text x="1447.5" y="634.5" font-size="14" fill="#d6d6d6" text-anchor="middle">0,4</text>
<line x1="1500.5" y1="613" x2="1500.5" y2="619" stroke="#e8e8e8" stroke-width="1.7"/>
<text x="1500.5" y="634.5" font-size="14" fill="#d6d6d6" text-anchor="middle">0,45</text>
<line x1="1554.5" y1="613" x2="1554.5" y2="619" stroke="#e8e8e8" stroke-width="1.7"/>
<text x="1554.5" y="634.5" font-size="14" fill="#d6d6d6" text-anchor="middle">0,5</text>
<line x1="1607.5" y1="613" x2="1607.5" y2="619" stroke="#e8e8e8" stroke-width="1.7"/>
<text x="1607.5" y="634.5" font-size="14" fill="#d6d6d6" text-anchor="middle">0,55</text>
<g clip-path="url(#clipframe)"><g clip-path="url(#cliplocus)"><foreignObject x="1022" y="122" width="640" height="491"><div style="width:640px;height:491px;background:conic-gradient(from 0deg at 209.5px 106.5px,#819900 0deg,#899900 2deg,#919900 4deg,#999900 6deg,#999400 8deg,#999000 10deg,#998b00 12deg,#998700 14deg,#998200 16deg,#997e00 18deg,#997900 20deg,#997500 22deg,#997100 24deg,#996c00 26deg,#996800 28deg,#996400 30deg,#995f00 32deg,#995b00 34deg,#995700 36deg,#995200 38deg,#994e00 40deg,#994a00 42deg,#994600 44deg,#994200 46deg,#993d00 48deg,#993900 50deg,#993500 52deg,#993100 54deg,#992d00 56deg,#992900 58deg,#992500 60deg,#992100 62deg,#991d00 64deg,#991900 66deg,#991600 68deg,#991200 70deg,#990e00 72deg,#990b00 74deg,#990700 76deg,#990400 78deg,#990100 80deg,#990000 82deg,#990000 84deg,#990001 86deg,#990002 88deg,#990003 90deg,#990005 92deg,#990007 94deg,#99000a 96deg,#99000d 98deg,#990010 100deg,#990014 102deg,#990018 104deg,#99001d 106deg,#990022 108deg,#990028 110deg,#99002f 112deg,#990035 114deg,#99003d 116deg,#990044 118deg,#99004d 120deg,#990056 122deg,#99005f 124deg,#990069 126deg,#990073 128deg,#99007e 130deg,#99008a 132deg,#990096 134deg,#930099 136deg,#8a0099 138deg,#820099 140deg,#7a0099 142deg,#720099 144deg,#6b0099 146deg,#630099 148deg,#5c0099 150deg,#550099 152deg,#4d0099 154deg,#470099 156deg,#400099 158deg,#390099 160deg,#330099 162deg,#2d0099 164deg,#270099 166deg,#220099 168deg,#1c0099 170deg,#170099 172deg,#120099 174deg,#0e0099 176deg,#0a0099 178deg,#060099 180deg,#030099 182deg,#010099 184deg,#000099 186deg,#000199 188deg,#000299 190deg,#000399 192deg,#000599 194deg,#000799 196deg,#000999 198deg,#000c99 200deg,#000e99 202deg,#001199 204deg,#001499 206deg,#001799 208deg,#001a99 210deg,#001e99 212deg,#002199 214deg,#002599 216deg,#002999 218deg,#002d99 220deg,#003199 222deg,#003699 224deg,#003a99 226deg,#003f99 228deg,#004499 230deg,#004999 232deg,#004e99 234deg,#005399 236deg,#005899 238deg,#005d99 240deg,#006399 242deg,#006999 244deg,#006e99 246deg,#007499 248deg,#007a99 250deg,#008099 252deg,#008699 254deg,#008d99 256deg,#009399 258deg,#009998 260deg,#00998c 262deg,#009981 264deg,#009976 266deg,#00996b 268deg,#009962 270deg,#009958 272deg,#009950 274deg,#009947 276deg,#00993f 278deg,#009938 280deg,#009931 282deg,#00992b 284deg,#009925 286deg,#009920 288deg,#00991b 290deg,#009916 292deg,#009912 294deg,#00990f 296deg,#00990b 298deg,#009909 300deg,#009906 302deg,#009904 304deg,#009903 306deg,#009902 308deg,#009901 310deg,#009900 312deg,#009900 314deg,#019900 316deg,#039900 318deg,#069900 320deg,#0a9900 322deg,#0e9900 324deg,#129900 326deg,#179900 328deg,#1c9900 330deg,#219900 332deg,#279900 334deg,#2c9900 336deg,#339900 338deg,#399900 340deg,#3f9900 342deg,#469900 344deg,#4d9900 346deg,#549900 348deg,#5b9900 350deg,#629900 352deg,#6a9900 354deg,#719900 356deg,#799900 358deg,#819900 360deg)"></div></foreignObject></g></g>
<g clip-path="url(#cliptri)"><foreignObject x="1022" y="122" width="640" height="491"><div style="width:640px;height:491px;background:conic-gradient(from 0deg at 209.5px 106.5px,#d7ff00 0deg,#e5ff00 2deg,#f2ff00 4deg,#fffe00 6deg,#fff700 8deg,#ffef00 10deg,#ffe800 12deg,#ffe000 14deg,#ffd900 16deg,#ffd200 18deg,#ffca00 20deg,#ffc300 22deg,#ffbc00 24deg,#ffb400 26deg,#ffad00 28deg,#ffa600 30deg,#ff9f00 32deg,#ff9800 34deg,#ff9000 36deg,#ff8900 38deg,#ff8200 40deg,#ff7b00 42deg,#ff7400 44deg,#ff6d00 46deg,#ff6600 48deg,#ff5f00 50deg,#ff5900 52deg,#ff5200 54deg,#ff4b00 56deg,#ff4400 58deg,#ff3e00 60deg,#ff3700 62deg,#ff3100 64deg,#ff2a00 66deg,#ff2400 68deg,#ff1e00 70deg,#ff1800 72deg,#ff1200 74deg,#ff0c00 76deg,#ff0600 78deg,#ff0100 80deg,#ff0000 82deg,#ff0001 84deg,#ff0002 86deg,#ff0003 88deg,#ff0005 90deg,#ff0008 92deg,#ff000c 94deg,#ff0010 96deg,#ff0015 98deg,#ff001b 100deg,#ff0021 102deg,#ff0029 104deg,#ff0031 106deg,#ff0039 108deg,#ff0043 110deg,#ff004e 112deg,#ff0059 114deg,#ff0065 116deg,#ff0072 118deg,#ff0080 120deg,#ff008f 122deg,#ff009e 124deg,#ff00af 126deg,#ff00c0 128deg,#ff00d2 130deg,#ff00e6 132deg,#ff00fa 134deg,#f400ff 136deg,#e700ff 138deg,#d900ff 140deg,#cc00ff 142deg,#bf00ff 144deg,#b200ff 146deg,#a500ff 148deg,#9900ff 150deg,#8d00ff 152deg,#8100ff 154deg,#7600ff 156deg,#6b00ff 158deg,#6000ff 160deg,#5500ff 162deg,#4b00ff 164deg,#4100ff 166deg,#3800ff 168deg,#2f00ff 170deg,#2700ff 172deg,#1f00ff 174deg,#1700ff 176deg,#1000ff 178deg,#0a00ff 180deg,#0500ff 182deg,#0100ff 184deg,#0000ff 186deg,#0001ff 188deg,#0003ff 190deg,#0006ff 192deg,#0008ff 194deg,#000cff 196deg,#000fff 198deg,#0013ff 200deg,#0018ff 202deg,#001cff 204deg,#0021ff 206deg,#0026ff 208deg,#002cff 210deg,#0032ff 212deg,#0038ff 214deg,#003eff 216deg,#0045ff 218deg,#004bff 220deg,#0052ff 222deg,#005aff 224deg,#0061ff 226deg,#0069ff 228deg,#0071ff 230deg,#0079ff 232deg,#0081ff 234deg,#008aff 236deg,#0093ff 238deg,#009cff 240deg,#00a5ff 242deg,#00aeff 244deg,#00b8ff 246deg,#00c2ff 248deg,#00ccff 250deg,#00d6ff 252deg,#00e0ff 254deg,#00eaff 256deg,#00f5ff 258deg,#00fffd 260deg,#00ffe9 262deg,#00ffd6 264deg,#00ffc4 266deg,#00ffb3 268deg,#00ffa3 270deg,#00ff93 272deg,#00ff85 274deg,#00ff77 276deg,#00ff6a 278deg,#00ff5e 280deg,#00ff52 282deg,#00ff48 284deg,#00ff3e 286deg,#00ff35 288deg,#00ff2d 290deg,#00ff25 292deg,#00ff1e 294deg,#00ff18 296deg,#00ff13 298deg,#00ff0e 300deg,#00ff0b 302deg,#00ff07 304deg,#00ff05 306deg,#00ff03 308deg,#00ff01 310deg,#00ff00 312deg,#00ff00 314deg,#01ff00 316deg,#05ff00 318deg,#0aff00 320deg,#10ff00 322deg,#17ff00 324deg,#1eff00 326deg,#26ff00 328deg,#2eff00 330deg,#37ff00 332deg,#40ff00 334deg,#4aff00 336deg,#54ff00 338deg,#5fff00 340deg,#69ff00 342deg,#74ff00 344deg,#80ff00 346deg,#8cff00 348deg,#97ff00 350deg,#a4ff00 352deg,#b0ff00 354deg,#bdff00 356deg,#caff00 358deg,#d7ff00 360deg)"></div></foreignObject></g>
<g clip-path="url(#cliptri)" shape-rendering="crispEdges"><path d="M1231.5,228.5 L1154.5,151.6 L1501.5,184.0Z" fill="url(#wt0)"/><path d="M1231.5,228.5 L1501.5,184.0 L1208.5,483.5Z" fill="url(#wt1)"/><path d="M1231.5,228.5 L1208.5,483.5 L1154.5,151.6Z" fill="url(#wt2)"/></g>
<rect x="1148.1" y="145.1" width="13" height="13" fill="none" stroke="#f2f2f2" stroke-width="1.35"/>
<rect x="1232.0" y="153.0" width="13" height="13" fill="none" stroke="#f2f2f2" stroke-width="1.35"/>
<rect x="1495.0" y="177.5" width="13" height="13" fill="none" stroke="#f2f2f2" stroke-width="1.35"/>
<rect x="1163.2" y="233.1" width="13" height="13" fill="none" stroke="#f2f2f2" stroke-width="1.35"/>
<rect x="1340.0" y="335.0" width="13" height="13" fill="none" stroke="#f2f2f2" stroke-width="1.35"/>
<rect x="1202.0" y="477.0" width="13" height="13" fill="none" stroke="#f2f2f2" stroke-width="1.35"/>
<rect x="1225.0" y="222.0" width="13" height="13" fill="none" stroke="#000" stroke-width="2.2"/>
<circle cx="1154" cy="151.5" r="4.3" fill="#12a812" stroke="#111" stroke-width="1.2"/>
<circle cx="1239.8" cy="159.4" r="4.3" fill="#b8b400" stroke="#111" stroke-width="1.2"/>
<circle cx="1511.2" cy="182.5" r="4.3" fill="#cc0000" stroke="#111" stroke-width="1.2"/>
<circle cx="1167.8" cy="242" r="4.3" fill="#20a8a8" stroke="#111" stroke-width="1.2"/>
<circle cx="1343.3" cy="347.5" r="4.3" fill="#b800b8" stroke="#222" stroke-width="1.2"/>
<circle cx="1204.8" cy="483.6" r="4.3" fill="#0000c0" stroke="#000070" stroke-width="1.2"/>
<circle cx="1231.4" cy="230.3" r="4.3" fill="#ffffff" stroke="#111" stroke-width="1.2"/>
<rect x="1405" y="581.5" width="253.5" height="27.5" fill="#2e2e2e"/>
<text x="1407.4" y="602.2" font-size="19" fill="#f2f2f2" textLength="220.6" lengthAdjust="spacingAndGlyphs">Gamut Coverage:  99,9%</text>
<text x="810.5" y="673.6" font-size="14" fill="#d6d6d6" text-anchor="middle" textLength="75.7" lengthAdjust="spacingAndGlyphs">CIE 1931 xy</text>
<foreignObject x="640" y="679" width="342" height="199"><div style="width:342px;height:199px;box-sizing:border-box;border:1px solid #8c8c8c;background:radial-gradient(circle at 148px 101px, #ffffff 0px, rgba(255,255,255,0.95) 22px, rgba(255,255,255,0.62) 70px, rgba(255,255,255,0.3) 130px, rgba(255,255,255,0) 210px),conic-gradient(from 0deg at 148px 101px, #c0ffb4 0deg, #eeffa8 38deg, #ffffa8 54deg, #ffd8a0 66deg, #ffa8b0 92deg, #ff88bc 118deg, #ffa8ee 150deg, #e4b4ff 182deg, #a8c4ff 236deg, #90ffff 270deg, #80ffc4 308deg, #c0ffb4 360deg)"></div></foreignObject>
<rect x="803.7" y="770.4" width="14" height="14" fill="#ffffff" stroke="#000" stroke-width="2.2" fill-opacity="0"/>
<circle cx="786.2" cy="800" r="4.2" fill="#b4b4b4" stroke="#111" stroke-width="1.1"/>
<circle cx="790.4" cy="794.2" r="4.2" fill="#ffffff" stroke="#111" stroke-width="1.1"/>
<rect x="998.5" y="663.5" width="652" height="225" fill="#333333" stroke="#000" stroke-width="1.5"/>
<rect x="1000" y="665" width="633" height="16" fill="#2e2e2e"/>
<rect x="1000" y="681" width="633" height="17" fill="#141414"/>
<text x="1131" y="687.6" font-size="18.5" fill="#f0f0f0" text-anchor="middle" textLength="41.7" lengthAdjust="spacingAndGlyphs">White</text>
<text x="1204" y="687.6" font-size="18.5" fill="#f0f0f0" text-anchor="middle" textLength="26.5" lengthAdjust="spacingAndGlyphs">Red</text>
<text x="1277.4" y="687.6" font-size="18.5" fill="#f0f0f0" text-anchor="middle" textLength="42.8" lengthAdjust="spacingAndGlyphs">Green</text>
<text x="1350.6" y="687.6" font-size="18.5" fill="#f0f0f0" text-anchor="middle" textLength="30.2" lengthAdjust="spacingAndGlyphs">Blue</text>
<text x="1423.4" y="687.6" font-size="18.5" fill="#f0f0f0" text-anchor="middle" textLength="34.7" lengthAdjust="spacingAndGlyphs">Cyan</text>
<text x="1497.8" y="687.6" font-size="18.5" fill="#f0f0f0" text-anchor="middle" textLength="61.2" lengthAdjust="spacingAndGlyphs">Magenta</text>
<text x="1572" y="687.6" font-size="18.5" fill="#f0f0f0" text-anchor="middle" textLength="44.9" lengthAdjust="spacingAndGlyphs">Yellow</text>
<g clip-path="url(#cliphdr)"><text x="1630.5" y="687.6" font-size="18.5" fill="#f0f0f0">1</text></g>
<g clip-path="url(#cliptab)"><rect x="1000" y="698" width="633" height="31" fill="#3b3b3b"/><text x="1012" y="721.3" font-size="19.5" fill="#f4f4f4" font-weight="bold" textLength="64.5" lengthAdjust="spacingAndGlyphs">x: CIE31</text><text x="1097" y="721.3" font-size="19.5" fill="#f4f4f4" textLength="49.2" lengthAdjust="spacingAndGlyphs">0,3092</text><text x="1174.5" y="721.3" font-size="19.5" fill="#f4f4f4" textLength="49.2" lengthAdjust="spacingAndGlyphs">0,6495</text><text x="1243" y="721.3" font-size="19.5" fill="#f4f4f4" textLength="49.2" lengthAdjust="spacingAndGlyphs">0,2993</text><text x="1320.5" y="721.3" font-size="19.5" fill="#f4f4f4" textLength="49.2" lengthAdjust="spacingAndGlyphs">0,1469</text><text x="1389" y="721.3" font-size="19.5" fill="#f4f4f4" textLength="49.2" lengthAdjust="spacingAndGlyphs">0,2210</text><text x="1466.5" y="721.3" font-size="19.5" fill="#f4f4f4" textLength="49.2" lengthAdjust="spacingAndGlyphs">0,3146</text><text x="1538" y="721.3" font-size="19.5" fill="#f4f4f4" textLength="49.2" lengthAdjust="spacingAndGlyphs">0,4213</text><text x="1615.5" y="721.3" font-size="19.5" fill="#f4f4f4" textLength="22.4" lengthAdjust="spacingAndGlyphs">0,3</text><rect x="1000" y="729" width="633" height="31" fill="#7b7b7b"/><text x="1012" y="752.3" font-size="19.5" fill="#f4f4f4" font-weight="bold" textLength="63.7" lengthAdjust="spacingAndGlyphs">y: CIE31</text><text x="1097" y="752.3" font-size="19.5" fill="#f4f4f4" textLength="49.2" lengthAdjust="spacingAndGlyphs">0,3233</text><text x="1174.5" y="752.3" font-size="19.5" fill="#f4f4f4" textLength="49.2" lengthAdjust="spacingAndGlyphs">0,3298</text><text x="1243" y="752.3" font-size="19.5" fill="#f4f4f4" textLength="49.2" lengthAdjust="spacingAndGlyphs">0,6043</text><text x="1320.5" y="752.3" font-size="19.5" fill="#f4f4f4" textLength="49.2" lengthAdjust="spacingAndGlyphs">0,0603</text><text x="1389" y="752.3" font-size="19.5" fill="#f4f4f4" textLength="49.2" lengthAdjust="spacingAndGlyphs">0,3216</text><text x="1466.5" y="752.3" font-size="19.5" fill="#f4f4f4" textLength="49.2" lengthAdjust="spacingAndGlyphs">0,1497</text><text x="1538" y="752.3" font-size="19.5" fill="#f4f4f4" textLength="49.2" lengthAdjust="spacingAndGlyphs">0,5057</text><text x="1615.5" y="752.3" font-size="19.5" fill="#f4f4f4" textLength="22.4" lengthAdjust="spacingAndGlyphs">0,3</text><rect x="1000" y="760" width="633" height="31" fill="#3b3b3b"/><text x="1012" y="783.3" font-size="19.5" fill="#f4f4f4" font-weight="bold">Y</text><text x="1097" y="783.3" font-size="19.5" fill="#f4f4f4" textLength="67.1" lengthAdjust="spacingAndGlyphs">314,2040</text><text x="1174.5" y="783.3" font-size="19.5" fill="#f4f4f4" textLength="58.2" lengthAdjust="spacingAndGlyphs">65,3658</text><text x="1243" y="783.3" font-size="19.5" fill="#f4f4f4" textLength="67.1" lengthAdjust="spacingAndGlyphs">222,2240</text><text x="1320.5" y="783.3" font-size="19.5" fill="#f4f4f4" textLength="58.2" lengthAdjust="spacingAndGlyphs">23,9074</text><text x="1389" y="783.3" font-size="19.5" fill="#f4f4f4" textLength="67.1" lengthAdjust="spacingAndGlyphs">247,0054</text><text x="1466.5" y="783.3" font-size="19.5" fill="#f4f4f4" textLength="58.2" lengthAdjust="spacingAndGlyphs">89,5502</text><text x="1538" y="783.3" font-size="19.5" fill="#f4f4f4" textLength="67.1" lengthAdjust="spacingAndGlyphs">290,3105</text><text x="1615.5" y="783.3" font-size="19.5" fill="#f4f4f4" textLength="17.9" lengthAdjust="spacingAndGlyphs">56</text><rect x="1000" y="791" width="633" height="31" fill="#7b7b7b"/><text x="1012" y="814.3" font-size="19.5" fill="#f4f4f4" font-weight="bold" textLength="66.6" lengthAdjust="spacingAndGlyphs">Target Y</text><text x="1097" y="814.3" font-size="19.5" fill="#f4f4f4" textLength="67.1" lengthAdjust="spacingAndGlyphs">295,0802</text><text x="1174.5" y="814.3" font-size="19.5" fill="#f4f4f4" textLength="58.2" lengthAdjust="spacingAndGlyphs">62,7506</text><text x="1243" y="814.3" font-size="19.5" fill="#f4f4f4" textLength="67.1" lengthAdjust="spacingAndGlyphs">211,0291</text><text x="1320.5" y="814.3" font-size="19.5" fill="#f4f4f4" textLength="58.2" lengthAdjust="spacingAndGlyphs">21,3005</text><text x="1389" y="814.3" font-size="19.5" fill="#f4f4f4" textLength="67.1" lengthAdjust="spacingAndGlyphs">232,3296</text><text x="1466.5" y="814.3" font-size="19.5" fill="#f4f4f4" textLength="58.2" lengthAdjust="spacingAndGlyphs">84,0511</text><text x="1538" y="814.3" font-size="19.5" fill="#f4f4f4" textLength="67.1" lengthAdjust="spacingAndGlyphs">273,7797</text><text x="1615.5" y="814.3" font-size="19.5" fill="#f4f4f4" textLength="17.9" lengthAdjust="spacingAndGlyphs">56</text><rect x="1000" y="822" width="633" height="31" fill="#3b3b3b"/><text x="1012" y="845.3" font-size="19.5" fill="#f4f4f4" font-weight="bold" textLength="65.4" lengthAdjust="spacingAndGlyphs">ΔE 2000</text><text x="1097" y="845.3" font-size="19.5" fill="#f4f4f4" textLength="49.2" lengthAdjust="spacingAndGlyphs">2,8913</text><text x="1174.5" y="845.3" font-size="19.5" fill="#f4f4f4" textLength="49.2" lengthAdjust="spacingAndGlyphs">1,8185</text><text x="1243" y="845.3" font-size="19.5" fill="#f4f4f4" textLength="49.2" lengthAdjust="spacingAndGlyphs">1,2849</text><text x="1320.5" y="845.3" font-size="19.5" fill="#f4f4f4" textLength="49.2" lengthAdjust="spacingAndGlyphs">1,5117</text><text x="1389" y="845.3" font-size="19.5" fill="#f4f4f4" textLength="49.2" lengthAdjust="spacingAndGlyphs">2,1182</text><text x="1466.5" y="845.3" font-size="19.5" fill="#f4f4f4" textLength="49.2" lengthAdjust="spacingAndGlyphs">1,6211</text><text x="1538" y="845.3" font-size="19.5" fill="#f4f4f4" textLength="49.2" lengthAdjust="spacingAndGlyphs">1,4403</text><text x="1615.5" y="845.3" font-size="19.5" fill="#f4f4f4" textLength="22.4" lengthAdjust="spacingAndGlyphs">2,0</text><rect x="1000" y="853" width="633" height="31" fill="#7b7b7b"/><text x="1012" y="876.3" font-size="19.5" fill="#f4f4f4" font-weight="bold" textLength="54" lengthAdjust="spacingAndGlyphs">ΔE ITP</text><text x="1097" y="876.3" font-size="19.5" fill="#f4f4f4" textLength="49.2" lengthAdjust="spacingAndGlyphs">5,5255</text><text x="1174.5" y="876.3" font-size="19.5" fill="#f4f4f4" textLength="58.2" lengthAdjust="spacingAndGlyphs">10,1388</text><text x="1243" y="876.3" font-size="19.5" fill="#f4f4f4" textLength="49.2" lengthAdjust="spacingAndGlyphs">4,4107</text><text x="1320.5" y="876.3" font-size="19.5" fill="#f4f4f4" textLength="58.2" lengthAdjust="spacingAndGlyphs">11,3896</text><text x="1389" y="876.3" font-size="19.5" fill="#f4f4f4" textLength="49.2" lengthAdjust="spacingAndGlyphs">5,6890</text><text x="1466.5" y="876.3" font-size="19.5" fill="#f4f4f4" textLength="49.2" lengthAdjust="spacingAndGlyphs">6,1380</text><text x="1538" y="876.3" font-size="19.5" fill="#f4f4f4" textLength="49.2" lengthAdjust="spacingAndGlyphs">4,7034</text><text x="1615.5" y="876.3" font-size="19.5" fill="#f4f4f4" textLength="22.4" lengthAdjust="spacingAndGlyphs">1,6</text></g>
<path d="M1633,868 V702 Q1633,698 1637,698 H1646 Q1650,698 1650,702 V868 Z" fill="#5a5a5a"/>
<rect x="1635" y="700" width="13" height="16" fill="#6e6e6e" rx="3"/>
<path d="M1637.5,711 H1645.5 L1641.5,706 Z" fill="#3a3a3a"/>
<rect x="1635.5" y="720" width="12" height="104" fill="#434343" rx="6"/>
<rect x="1635" y="850" width="13" height="16" fill="#6e6e6e" rx="3"/>
<path d="M1637.5,855 H1645.5 L1641.5,860 Z" fill="#3a3a3a"/>
<rect x="1000" y="868.5" width="633" height="19.2" fill="#585858"/>
<rect x="1001" y="870" width="14" height="16" fill="#6e6e6e" rx="3"/>
<path d="M1004.5,878 L1011,873 V883 Z" fill="#3a3a3a"/>
<rect x="1019" y="870.5" width="546" height="15" fill="#434343" rx="7.5"/>
<rect x="1617" y="870" width="14" height="16" fill="#6e6e6e" rx="3"/>
<path d="M1627.5,878 L1621,873 V883 Z" fill="#3a3a3a"/>
<rect x="1633" y="868.5" width="17" height="19.2" fill="#3a3a3a"/>
<rect x="4.5" y="931.8" width="155.3" height="82" fill="url(#cbg)" rx="6"/>
<rect x="10.5" y="937.8" width="143" height="45.2" fill="#c0c0c0" rx="5"/>
<rect x="10.5" y="937.8" width="143" height="45.2" fill="url(#swbev)" rx="5"/>
<rect x="11.0" y="938.3" width="142" height="44.2" rx="4.5" fill="none" stroke="#000" stroke-opacity="0.18" stroke-width="1"/>
<text x="82.1" y="1001.8" font-size="13" fill="#2b2b2b" text-anchor="middle" font-weight="bold">White</text>
<rect x="162.35" y="931.8" width="155.3" height="82" fill="url(#cbg)" rx="6"/>
<rect x="168.35" y="937.8" width="143" height="45.2" fill="#c00000" rx="5"/>
<rect x="168.35" y="937.8" width="143" height="45.2" fill="url(#swbev)" rx="5"/>
<rect x="168.85" y="938.3" width="142" height="44.2" rx="4.5" fill="none" stroke="#000" stroke-opacity="0.18" stroke-width="1"/>
<text x="239.95" y="1001.8" font-size="13" fill="#2b2b2b" text-anchor="middle" font-weight="bold">Red</text>
<rect x="320.2" y="931.8" width="155.3" height="82" fill="url(#cbg)" rx="6"/>
<rect x="326.2" y="937.8" width="143" height="45.2" fill="#00c000" rx="5"/>
<rect x="326.2" y="937.8" width="143" height="45.2" fill="url(#swbev)" rx="5"/>
<rect x="326.7" y="938.3" width="142" height="44.2" rx="4.5" fill="none" stroke="#000" stroke-opacity="0.18" stroke-width="1"/>
<text x="397.79999999999995" y="1001.8" font-size="13" fill="#2b2b2b" text-anchor="middle" font-weight="bold">Green</text>
<rect x="478.04999999999995" y="931.8" width="155.3" height="82" fill="url(#cbg)" rx="6"/>
<rect x="484.04999999999995" y="937.8" width="143" height="45.2" fill="#0000c0" rx="5"/>
<rect x="484.04999999999995" y="937.8" width="143" height="45.2" fill="url(#swbev)" rx="5"/>
<rect x="484.54999999999995" y="938.3" width="142" height="44.2" rx="4.5" fill="none" stroke="#000" stroke-opacity="0.18" stroke-width="1"/>
<text x="555.65" y="1001.8" font-size="13" fill="#2b2b2b" text-anchor="middle" font-weight="bold">Blue</text>
<rect x="635.9" y="931.8" width="155.3" height="82" fill="url(#cbg)" rx="6"/>
<rect x="641.9" y="937.8" width="143" height="45.2" fill="#00c0c0" rx="5"/>
<rect x="641.9" y="937.8" width="143" height="45.2" fill="url(#swbev)" rx="5"/>
<rect x="642.4" y="938.3" width="142" height="44.2" rx="4.5" fill="none" stroke="#000" stroke-opacity="0.18" stroke-width="1"/>
<text x="713.5" y="1001.8" font-size="13" fill="#2b2b2b" text-anchor="middle" font-weight="bold">Cyan</text>
<rect x="793.75" y="931.8" width="155.3" height="82" fill="url(#cbg)" rx="6"/>
<rect x="799.75" y="937.8" width="143" height="45.2" fill="#c000c0" rx="5"/>
<rect x="799.75" y="937.8" width="143" height="45.2" fill="url(#swbev)" rx="5"/>
<rect x="800.25" y="938.3" width="142" height="44.2" rx="4.5" fill="none" stroke="#000" stroke-opacity="0.18" stroke-width="1"/>
<text x="871.35" y="1001.8" font-size="13" fill="#2b2b2b" text-anchor="middle" font-weight="bold">Magenta</text>
<rect x="951.5999999999999" y="931.8" width="155.3" height="82" fill="url(#cbg)" rx="6"/>
<rect x="957.5999999999999" y="937.8" width="143" height="45.2" fill="#c0c000" rx="5"/>
<rect x="957.5999999999999" y="937.8" width="143" height="45.2" fill="url(#swbev)" rx="5"/>
<rect x="958.0999999999999" y="938.3" width="142" height="44.2" rx="4.5" fill="none" stroke="#000" stroke-opacity="0.18" stroke-width="1"/>
<text x="1029.1999999999998" y="1001.8" font-size="13" fill="#2b2b2b" text-anchor="middle" font-weight="bold">Yellow</text>
<rect x="1109.45" y="931.8" width="155.3" height="82" fill="#2b2b2b" rx="6"/>
<rect x="1115.65" y="937.8" width="143" height="45.2" fill="#ffffff" rx="5"/>
<text x="1187.05" y="1001.8" font-size="13" fill="#ffffff" text-anchor="middle" font-weight="bold">100W</text>
<rect x="1269.2" y="931.2" width="60" height="80" fill="url(#gb2)" rx="6"/>
<path d="M1269.2,953.8 V937.2 Q1269.2,931.2 1275.2,931.2 H1323.2 Q1329.2,931.2 1329.2,937.2 V953.8 Z" fill="url(#gb1)"/>
<rect x="1269.2" y="953.6" width="60" height="1.6" fill="#3a3a3a"/>
<circle cx="1299.4" cy="942.7" r="9" fill="url(#icg)"/>
<path d="M1293.8,945.3 H1305 L1299.4,939.2 Z" fill="#333"/>
<rect x="1281.3" y="963.5" width="35.8" height="35.5" fill="#9c9c9c" stroke="#252525" stroke-width="3" rx="5"/>
<rect x="1282.8" y="982" width="32.8" height="16" fill="#8a8a8a"/>
<rect x="1291" y="973.2" width="17" height="16.8" fill="#000"/>
<rect x="1291" y="973.2" width="17" height="8.5" fill="#1c1c1c"/>
<rect x="1330" y="931" width="58" height="38" fill="url(#gb2)"/>
<rect x="1389" y="931" width="55" height="38" fill="url(#gb2)"/>
<rect x="1445" y="931" width="55" height="38" fill="url(#gb3)"/>
<rect x="1502" y="931" width="55" height="38" fill="url(#gb2)"/>
<rect x="1558" y="931" width="55" height="38" fill="url(#gb2)"/>
<rect x="1330" y="970" width="170" height="40" fill="url(#gb2)"/>
<rect x="1502" y="970" width="168" height="40" fill="url(#gb2)"/>
<circle cx="1359" cy="950" r="12.3" fill="url(#icg)"/>
<circle cx="1416.5" cy="950" r="12.3" fill="url(#icg)"/>
<circle cx="1472.5" cy="950" r="12.3" fill="url(#icg3)"/>
<circle cx="1529.5" cy="950" r="12.3" fill="url(#icg)"/>
<circle cx="1585.5" cy="950" r="12.3" fill="url(#icg)"/>
<rect x="1354" y="945.3" width="10" height="10" fill="#2e2e2e"/>
<path d="M1412,943.5 V956.5 L1423,950 Z" fill="#2e2e2e"/>
<path d="M1467.5,943.3 H1465.7 V956.7 H1467.5 M1477.5,943.3 H1479.3 V956.7 H1477.5" fill="none" stroke="#2e2e2e" stroke-width="2.2"/>
<circle cx="1470.7" cy="950" r="1.2" fill="#2e2e2e"/><circle cx="1474.3" cy="950" r="1.2" fill="#2e2e2e"/>
<path d="M1529.5,950 C1526.5,946 1522.2,946 1522.2,950 C1522.2,954 1526.5,954 1529.5,950 C1532.5,946 1536.8,946 1536.8,950 C1536.8,954 1532.5,954 1529.5,950 Z" fill="none" stroke="#2e2e2e" stroke-width="2"/>
<path d="M1579.8,947.5 A6,6 0 0 1 1590.5,946.2 M1591.2,952.5 A6,6 0 0 1 1580.5,953.8" fill="none" stroke="#2e2e2e" stroke-width="2.4"/>
<path d="M1592.5,942.8 V949.2 H1586.3 Z M1578.5,957.2 V950.8 H1584.7 Z" fill="#2e2e2e"/>
<circle cx="1369" cy="988.5" r="12" fill="url(#icg)"/>
<path d="M1368,983.5 L1363.5,988.5 L1368,993.5 M1373,983.5 L1368.5,988.5 L1373,993.5" fill="none" stroke="#333" stroke-width="1.8"/>
<text x="1403" y="999.3" font-size="27.5" fill="#2c2c2c" textLength="62.5" lengthAdjust="spacingAndGlyphs" stroke="#2c2c2c" stroke-width="0.7">Back</text>
<text x="1536.8" y="998.5" font-size="27.5" fill="#2c2c2c" textLength="64" lengthAdjust="spacingAndGlyphs" stroke="#2c2c2c" stroke-width="0.7">Next</text>
<circle cx="1635.7" cy="989.5" r="12" fill="url(#icg)"/>
<path d="M1631,984.5 L1635.5,989.5 L1631,994.5 M1636,984.5 L1640.5,989.5 L1636,994.5" fill="none" stroke="#333" stroke-width="1.8"/>
<g transform="translate(1640.5,949)" fill="#e40000" filter="url(#ash)"><rect x="-3.8" y="-16.5" width="7.6" height="33" rx="2.5" transform="rotate(0)"/><rect x="-3.8" y="-16.5" width="7.6" height="33" rx="2.5" transform="rotate(60)"/><rect x="-3.8" y="-16.5" width="7.6" height="33" rx="2.5" transform="rotate(120)"/></g>
<rect x="1664.5" y="40" width="7.5" height="968" fill="url(#rstrip)"/>
<rect x="1666" y="0" width="6" height="40" fill="url(#rstrip)"/>
</svg></body></html>
